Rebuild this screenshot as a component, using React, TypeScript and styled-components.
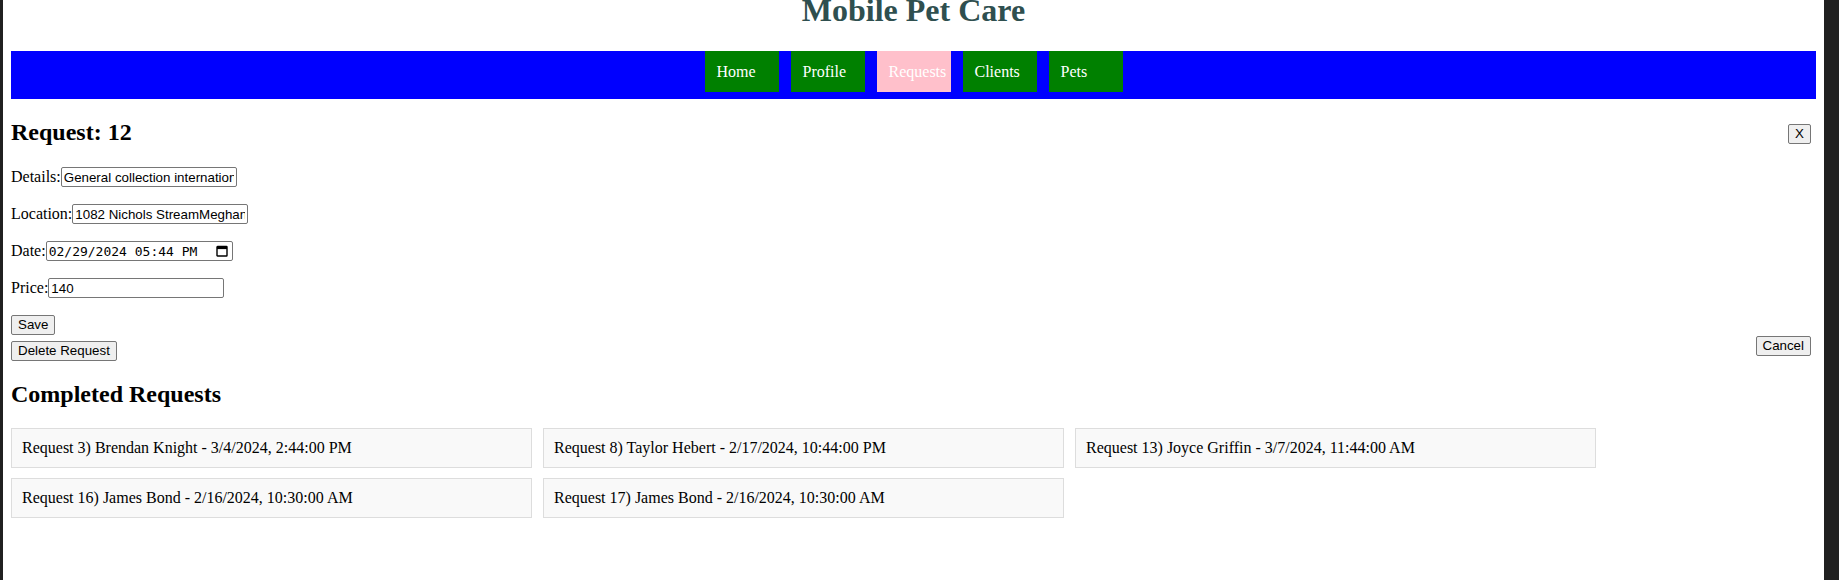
import React from 'react';
import styled, { createGlobalStyle } from 'styled-components';

const GlobalStyle = createGlobalStyle`
  html {
    background: #202020;
  }
  body {
    margin: 0;
    font-family: "Liberation Serif", "Times New Roman", serif;
    font-size: 16px;
    color: #000;
  }
`;

const Page = styled.div`
  margin: 0 15px 0 3px;
  min-height: 100vh;
  padding: 0 8px;
  background: #fff;
  box-sizing: border-box;
  overflow: hidden;
`;

const Title = styled.h1`
  margin: -8px 0 22px;
  font-size: 32px;
  line-height: 37px;
  font-weight: bold;
  text-align: center;
  color: #2f4f4f;
`;

const NavBar = styled.nav`
  display: flex;
  justify-content: center;
  gap: 12px;
  height: 48px;
  background: #0000ff;
`;

const NavLink = styled.a<{ $active?: boolean }>`
  display: block;
  width: 74px;
  height: 41px;
  box-sizing: border-box;
  padding: 12px 0 0 12px;
  background: ${(p) => (p.$active ? 'pink' : 'green')};
  color: #fff;
  line-height: 18px;
  text-decoration: none;
  white-space: nowrap;
`;

const PanelHeader = styled.div`
  display: flex;
  justify-content: space-between;
  align-items: flex-start;
  margin-top: 19px;
  padding-right: 5px;
`;

const Heading = styled.h2<{ $spaced?: boolean }>`
  margin: ${(p) => (p.$spaced ? '19px 0 20px' : '0')};
  font-size: 24px;
  line-height: 28px;
  font-weight: bold;
`;

const Button = styled.button`
  height: 20px;
  padding: 1px 6px;
  border: 1px solid #767676;
  border-radius: 2px;
  background: #efefef;
  color: #000;
  font-family: "Liberation Sans", Arial, sans-serif;
  font-size: 13.33px;
  line-height: 16px;
  box-sizing: border-box;
  cursor: pointer;
`;

const CloseButton = styled(Button)`
  margin-top: 6px;
`;

const FieldList = styled.div`
  display: flex;
  flex-direction: column;
  gap: 17px;
  margin-top: 21px;
`;

const Field = styled.div`
  display: flex;
  align-items: baseline;
  height: 20px;
`;

const Label = styled.label`
  line-height: 18px;
`;

const TextInput = styled.input`
  width: 176px;
  height: 20px;
  box-sizing: border-box;
  margin: 0;
  padding: 1px 2px;
  border: 1px solid #767676;
  border-radius: 2px;
  font-family: "Liberation Sans", Arial, sans-serif;
  font-size: 13.33px;
  color: #000;
`;

const DateBox = styled.div`
  display: inline-flex;
  align-items: center;
  width: 187px;
  height: 20px;
  box-sizing: border-box;
  padding: 0 4px 0 2px;
  border: 1px solid #767676;
  border-radius: 2px;
`;

const DateText = styled.input`
  flex: 1;
  min-width: 0;
  margin: 0;
  padding: 0;
  border: none;
  outline: none;
  background: transparent;
  font-family: "DejaVu Sans Mono", "Liberation Mono", monospace;
  font-size: 13px;
  color: #000;
`;

const Actions = styled.div`
  display: flex;
  justify-content: space-between;
  margin-top: 17px;
  padding-right: 5px;
`;

const ActionColumn = styled.div`
  display: flex;
  flex-direction: column;
  align-items: flex-start;
  gap: 6px;
`;

const CancelButton = styled(Button)`
  align-self: flex-end;
  margin-bottom: 5px;
`;

const CardGrid = styled.div`
  display: flex;
  flex-wrap: wrap;
  gap: 10.6px 11px;
`;

const Card = styled.div`
  width: 521px;
  box-sizing: border-box;
  padding: 10px;
  border: 1px solid #ddd;
  background: #f9f9f9;
  line-height: 17.5px;
`;

const CalendarIcon = () => (
  <svg width="12" height="12" viewBox="0 0 12 12" aria-hidden="true">
    <rect x="1" y="1.5" width="10" height="9.5" fill="none" stroke="#000" strokeWidth="1.4" rx="0.5" />
    <rect x="1" y="1.5" width="10" height="2.6" fill="#000" />
  </svg>
);

const navItems = ['Home', 'Profile', 'Requests', 'Clients', 'Pets'];

const completed = [
  'Request 3) Brendan Knight - 3/4/2024, 2:44:00 PM',
  'Request 8) Taylor Hebert - 2/17/2024, 10:44:00 PM',
  'Request 13) Joyce Griffin - 3/7/2024, 11:44:00 AM',
  'Request 16) James Bond - 2/16/2024, 10:30:00 AM',
  'Request 17) James Bond - 2/16/2024, 10:30:00 AM',
];

export default function App() {
  return (
    <Page>
      <GlobalStyle />
      <Title>Mobile Pet Care</Title>
      <NavBar>
        {navItems.map((item) => (
          <NavLink key={item} href="#" $active={item === 'Requests'}>
            {item}
          </NavLink>
        ))}
      </NavBar>

      <PanelHeader>
        <Heading>Request: 12</Heading>
        <CloseButton>X</CloseButton>
      </PanelHeader>

      <FieldList>
        <Field>
          <Label>Details:</Label>
          <TextInput type="text" defaultValue="General collection international" />
        </Field>
        <Field>
          <Label>Location:</Label>
          <TextInput type="text" defaultValue="1082 Nichols StreamMeghanberg" />
        </Field>
        <Field>
          <Label>Date:</Label>
          <DateBox>
            <DateText type="text" defaultValue="02/29/2024 05:44 PM" />
            <CalendarIcon />
          </DateBox>
        </Field>
        <Field>
          <Label>Price:</Label>
          <TextInput type="number" defaultValue="140" />
        </Field>
      </FieldList>

      <Actions>
        <ActionColumn>
          <Button>Save</Button>
          <Button>Delete Request</Button>
        </ActionColumn>
        <CancelButton>Cancel</CancelButton>
      </Actions>

      <Heading $spaced>Completed Requests</Heading>
      <CardGrid>
        {completed.map((text) => (
          <Card key={text}>{text}</Card>
        ))}
      </CardGrid>
    </Page>
  );
}
